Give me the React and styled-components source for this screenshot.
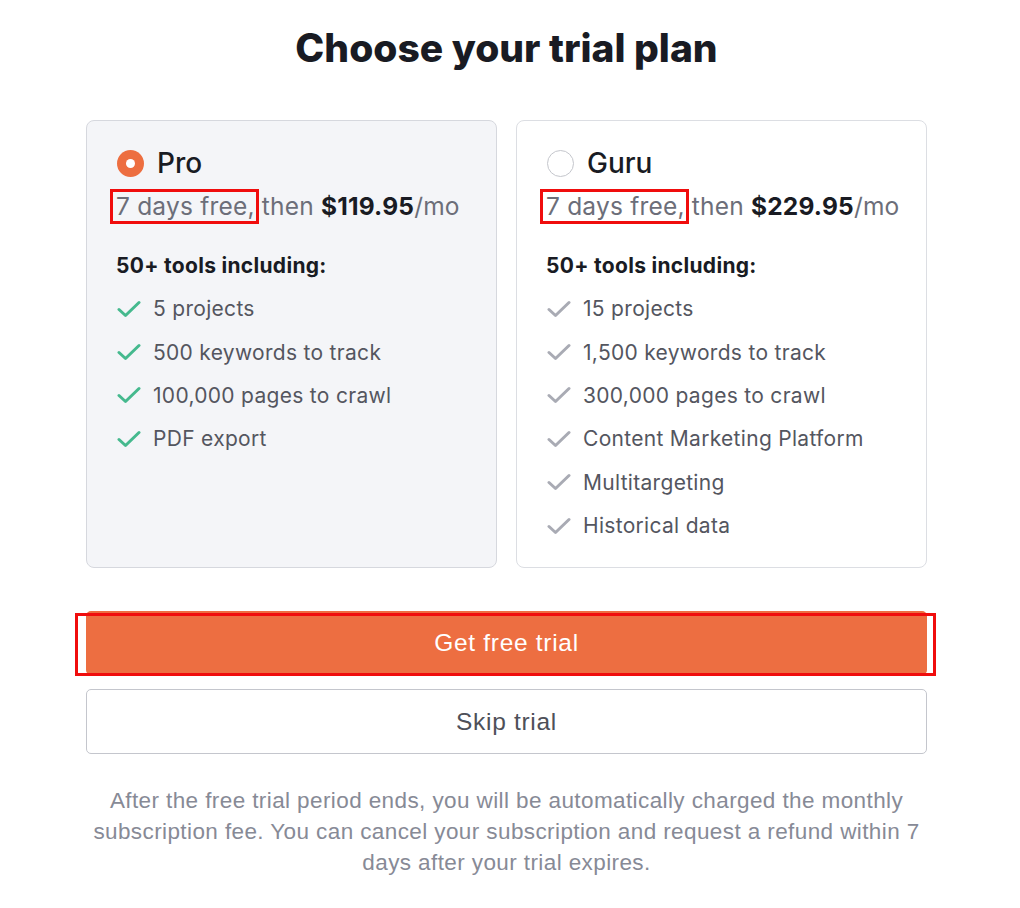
import React from 'react';
import styled, { createGlobalStyle } from 'styled-components';

const GlobalStyle = createGlobalStyle`
  body {
    margin: 0;
    background: #ffffff;
    font-family: Inter, "Noto Sans", sans-serif;
    color: #191b23;
  }
`;

const Page = styled.main`
  width: 841px;
  margin-left: 86px;
  padding-top: 25px;
  padding-bottom: 30px;
`;

const Title = styled.h1`
  margin: 0 0 49px;
  text-align: center;
  font-size: 39px;
  line-height: 46px;
  font-weight: 800;
  letter-spacing: 0;
  color: #191b23;
`;

const Plans = styled.div`
  display: grid;
  grid-template-columns: repeat(2, minmax(0, 1fr));
  gap: 19px;
`;

const Card = styled.label`
  display: flex;
  flex-direction: column;
  padding: 28px 30px 20px;
  min-height: 446px;
  box-sizing: border-box;
  border: 1px solid ${(p) => (p.$active ? '#d6d8de' : '#dcdee3')};
  border-radius: 8px;
  background: ${(p) => (p.$active ? '#f4f5f8' : '#ffffff')};
  cursor: pointer;
`;

const PlanRow = styled.div`
  display: flex;
  align-items: center;
  gap: 13px;
  height: 28px;
`;

const Radio = styled.span`
  width: 27px;
  height: 27px;
  border-radius: 50%;
  box-sizing: border-box;
  flex-shrink: 0;
  background: ${(p) => (p.$checked ? '#ed6e40' : '#ffffff')};
  border: ${(p) => (p.$checked ? 'none' : '1.5px solid #c4c6cc')};
  display: flex;
  align-items: center;
  justify-content: center;

  &::after {
    content: '';
    display: ${(p) => (p.$checked ? 'block' : 'none')};
    width: 9px;
    height: 9px;
    border-radius: 50%;
    background: #ffffff;
  }
`;

const PlanName = styled.span`
  font-size: 28px;
  line-height: 28px;
  font-weight: 500;
  color: #191b23;
`;

const Price = styled.p`
  margin: 13px 0 0 -1px;
  font-size: 24.5px;
  line-height: 32px;
  letter-spacing: 0.2px;
  color: #6c6e79;
  white-space: nowrap;

  strong {
    font-weight: 700;
    color: #191b23;
  }
`;

const Marked = styled.span`
  position: relative;

  &::after {
    content: '';
    position: absolute;
    left: -6px;
    right: -4px;
    top: -2px;
    bottom: -3px;
    border: 3px solid #f00d0d;
    pointer-events: none;
  }
`;

const ToolsHeading = styled.h3`
  margin: 30px 0 7px -1px;
  font-size: 21px;
  line-height: 28px;
  font-weight: 700;
  letter-spacing: 0.3px;
  color: #191b23;
`;

const Features = styled.ul`
  list-style: none;
  margin: 0;
  padding: 0;
`;

const Feature = styled.li`
  display: flex;
  align-items: center;
  gap: 12px;
  height: 43.4px;
  font-size: 21px;
  letter-spacing: 0.3px;
  color: #54565f;
`;

const CheckIcon = ({ color }) => (
  <svg width="24" height="18" viewBox="0 0 24 18" fill="none">
    <path
      d="M2 9.5 L8.5 15.5 L22 2.5"
      stroke={color}
      strokeWidth="3"
      strokeLinecap="round"
      strokeLinejoin="round"
    />
  </svg>
);

const Actions = styled.div`
  display: flex;
  flex-direction: column;
  gap: 14px;
  margin-top: 43px;
`;

const ButtonWrap = styled.div`
  position: relative;
`;

const Highlight = styled.span`
  position: absolute;
  left: -11px;
  right: -9px;
  top: 2px;
  bottom: -1px;
  border: 3px solid #f00d0d;
  pointer-events: none;
`;

const Button = styled.button`
  width: 100%;
  height: ${(p) => (p.$primary ? '64px' : '65px')};
  border-radius: 5px;
  border: ${(p) => (p.$primary ? 'none' : '1px solid #c4c6cd')};
  background: ${(p) => (p.$primary ? '#ed6e41' : '#ffffff')};
  color: ${(p) => (p.$primary ? '#ffffff' : '#4e5059')};
  font-family: "Liberation Sans", Arial, sans-serif;
  font-size: 24.5px;
  letter-spacing: 0.7px;
  cursor: pointer;
`;

const Note = styled.p`
  margin: 31px 0 0;
  text-align: center;
  font-family: "Liberation Sans", Arial, sans-serif;
  font-size: 22.5px;
  line-height: 31px;
  letter-spacing: 0.4px;
  color: #878a96;
`;

const plans = [
  {
    name: 'Pro',
    price: '$119.95',
    active: true,
    features: ['5 projects', '500 keywords to track', '100,000 pages to crawl', 'PDF export'],
  },
  {
    name: 'Guru',
    price: '$229.95',
    active: false,
    features: [
      '15 projects',
      '1,500 keywords to track',
      '300,000 pages to crawl',
      'Content Marketing Platform',
      'Multitargeting',
      'Historical data',
    ],
  },
];

export default function App() {
  return (
    <>
      <GlobalStyle />
      <Page>
        <Title>Choose your trial plan</Title>
        <Plans>
          {plans.map((plan) => (
            <Card key={plan.name} $active={plan.active}>
              <PlanRow>
                <Radio $checked={plan.active} />
                <PlanName>{plan.name}</PlanName>
              </PlanRow>
              <Price>
                <Marked>7 days free,</Marked> then <strong>{plan.price}</strong>/mo
              </Price>
              <ToolsHeading>50+ tools including:</ToolsHeading>
              <Features>
                {plan.features.map((f) => (
                  <Feature key={f}>
                    <CheckIcon color={plan.active ? '#45b98e' : '#a9abb4'} />
                    {f}
                  </Feature>
                ))}
              </Features>
            </Card>
          ))}
        </Plans>
        <Actions>
          <ButtonWrap>
            <Button $primary>Get free trial</Button>
            <Highlight />
          </ButtonWrap>
          <Button>Skip trial</Button>
        </Actions>
        <Note>
          After the free trial period ends, you will be automatically charged the monthly
          subscription fee. You can cancel your subscription and request a refund within 7
          days after your trial expires.
        </Note>
      </Page>
    </>
  );
}
